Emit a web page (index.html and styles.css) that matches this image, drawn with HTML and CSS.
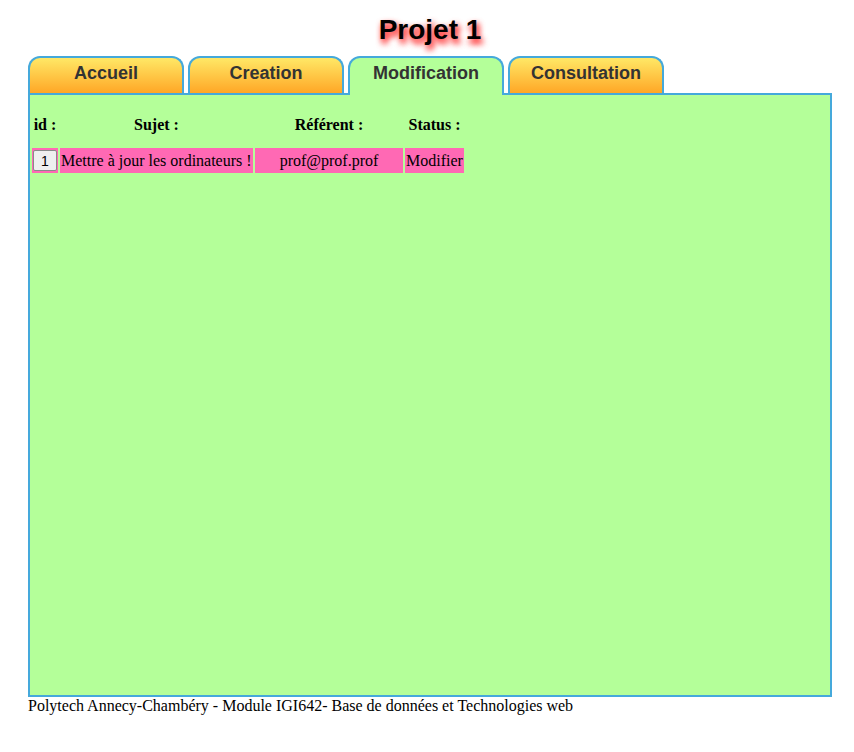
FILE: index.html
```html
<!DOCTYPE html>
<html lang="fr">
<head>
<meta charset="utf-8">
<title>Projet 1</title>
<link rel="stylesheet" href="styles.css">
</head>
<body>
<div class="page">
  <h1 class="title">Projet 1</h1>
  <nav class="tabs">
    <a class="tab">Accueil</a>
    <a class="tab">Creation</a>
    <a class="tab active">Modification</a>
    <a class="tab">Consultation</a>
  </nav>
  <main class="panel">
    <table class="list">
      <colgroup>
        <col class="c-id"><col class="c-sujet"><col class="c-ref"><col class="c-status">
      </colgroup>
      <thead>
        <tr><th>id :</th><th>Sujet :</th><th>Référent :</th><th>Status :</th></tr>
      </thead>
      <tbody>
        <tr class="row">
          <td class="cell-id"><button class="idbtn" type="button">1</button></td>
          <td>Mettre à jour les ordinateurs !</td>
          <td class="center">prof@prof.prof</td>
          <td>Modifier</td>
        </tr>
      </tbody>
    </table>
  </main>
  <footer class="foot">Polytech Annecy-Chambéry - Module IGI642- Base de données et Technologies web</footer>
</div>
</body>
</html>
```
FILE: styles.css
```css
html, body { margin: 0; padding: 0; background: #fff; }
body { font-family: "Liberation Serif", "Times New Roman", serif; font-size: 16px; color: #000; }
.page { width: 804px; margin-left: 28px; }
.title {
  margin: 0;
  padding-top: 14px;
  height: 56px;
  box-sizing: border-box;
  text-align: center;
  font-family: "Liberation Sans", Arial, sans-serif;
  font-weight: bold;
  font-size: 28px;
  line-height: 32px;
  color: #000;
  text-shadow: 2px 4px 6px #ff3a3a, 2px 4px 6px #ff5a5a;
}
.tabs { display: flex; gap: 4px; height: 37px; position: relative; z-index: 1; }
.tab {
  width: 156px;
  box-sizing: border-box;
  height: 37px;
  border: 2px solid #45a9db;
  border-bottom: none;
  border-radius: 12px 12px 0 0;
  background: linear-gradient(#ffe866, #ffa726);
  font-family: "Liberation Sans", Arial, sans-serif;
  font-weight: bold;
  font-size: 18px;
  color: #333;
  text-align: center;
  line-height: 30px;
}
.tab.active { background: #b4ff99; height: 39px; }
.panel {
  height: 604px;
  box-sizing: border-box;
  border: 2px solid #45a9db;
  background: #b4ff99;
  padding: 18px 0 0 0;
}
.list { border-spacing: 2px; }
.c-id { width: 26px; }
.c-sujet { width: 193px; }
.c-ref { width: 148px; }
.c-status { width: 59px; }
.list th { font-weight: bold; padding: 1px 1px 12px; line-height: 18px; text-align: center; font-size: 16px; }
.list td { background: #ff69b4; padding: 0 1px; line-height: 23px; height: 23px; white-space: nowrap; }
.list td.cell-id { padding: 1px; line-height: 0; }
.center { text-align: center; }
.idbtn {
  width: 24px; height: 21px; padding: 0;
  font-family: "Liberation Sans", Arial, sans-serif; font-size: 14px;
  background: #efefef; border: 1px solid #8a8a8a; border-radius: 2px; color: #000;
}
.foot { line-height: 18px; padding-top: 0; }
```
